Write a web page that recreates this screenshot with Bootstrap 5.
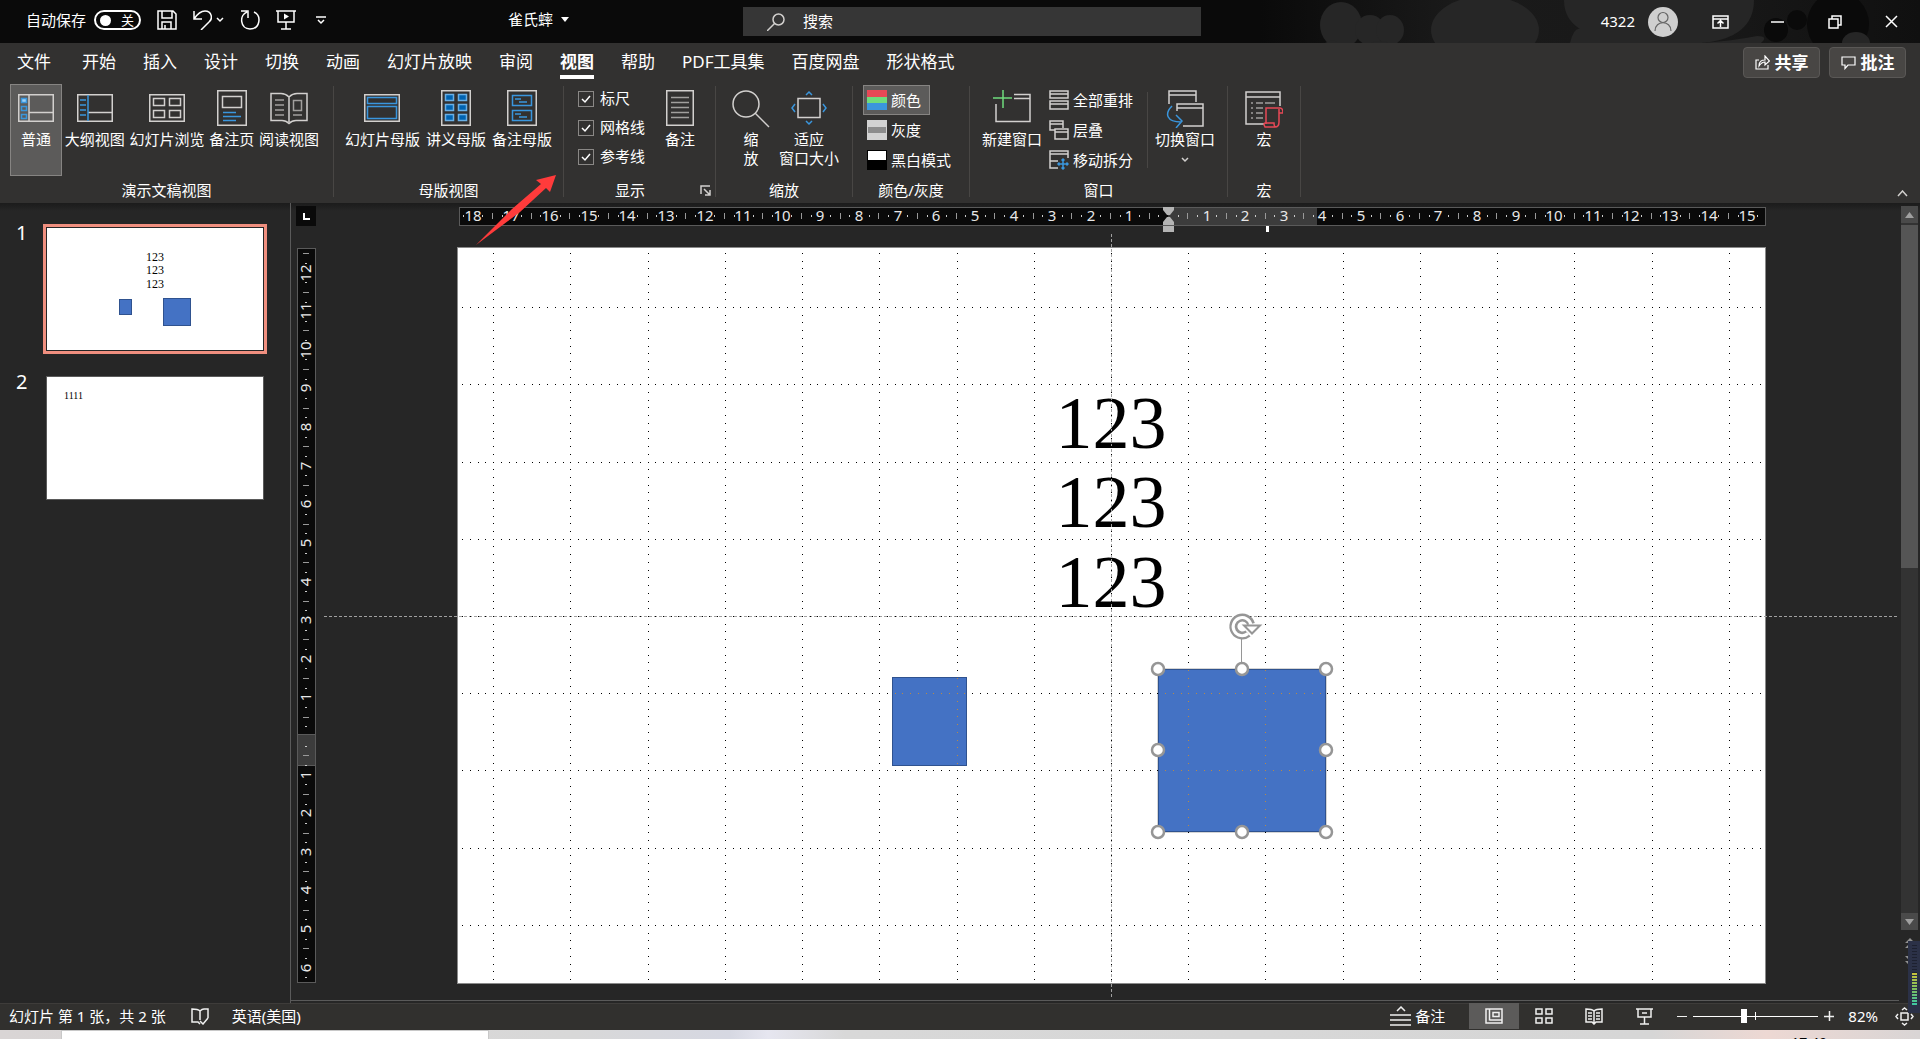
<!DOCTYPE html>
<html lang="zh-CN">
<head>
<meta charset="utf-8">
<meta name="viewport" content="width=device-width, initial-scale=1">
<title>雀氏蟀 - PowerPoint</title>
<link href="https://cdn.jsdelivr.net/npm/bootstrap@5.3.0/dist/css/bootstrap.min.css" rel="stylesheet">
<style>
:root{--blue:#3a96dd;--line:#d2d0ce}
body{font-family:"Noto Sans","Noto Sans CJK SC",sans-serif;font-size:15px;line-height:19px;color:#fff;background:#262626;overflow:hidden}
button{font:inherit;color:inherit;background:none;border:0;padding:0}
a{color:inherit;text-decoration:none}
svg{display:block;flex:none;fill:none;stroke:var(--line);stroke-width:1.5}
svg text{stroke:none;fill:#e8e8e8}
.b{stroke:var(--blue)}
.titlebar{height:43px;background:#0a0a0a;display:grid;grid-template-columns:508px 235px minmax(200px,458px) 1fr}
.quick{padding:0 0 3px 26px;gap:16px}
.quick svg,.wctl svg{stroke:#fff}
.deco{top:0;right:0;stroke:none}
.switch{width:47px;height:20px;border:2px solid #fff;border-radius:10px;padding:0 5px 0 4px;font-size:13px;line-height:16px}
.knob{width:11px;height:11px;border-radius:50%;background:#fff}
.finder{height:29px;background:#363636;padding-left:24px;gap:18px}
.finder input{background:none;border:0;outline:0;color:#fff;padding:0;line-height:19px}
.finder input::placeholder{color:#fff;opacity:1}
.wctl button{width:57px;height:43px}
.avatar{width:30px;height:30px;border-radius:50%;background:#cfcfcf;margin:0 14px 0 13px}
.wctl .avatar svg{stroke:#666;stroke-width:1.2}
.ribbon{background:#323130;height:160px}
.tabs{height:41px;font-size:17px;line-height:24px;gap:27px;padding:0 14px 0 17px}
.tabs a{padding:7px 0 1px}
.tabs a:first-child{margin-right:4px}
.tabs a.active{font-weight:700;border-bottom:4px solid #fff;align-self:flex-start}
.pill{width:77px;height:31px;border:1px solid #5a5856;border-radius:4px;background:#484644;font-weight:700;gap:5px;margin:4px 0 0 9px}
.pill svg{stroke-width:1.2;stroke:#fff}
.grp{display:flex;flex-direction:column;height:119px}
.grp>.body{height:92px;display:flex}
.grp>.cap{text-align:center;margin-top:5px;display:flex;align-items:center}
.grp>.cap span{flex:1}
.sep{width:1px;margin:2px 0 6px;background:#484644}
.big{padding:6px 3px 0;display:flex;flex-direction:column;align-items:center;height:92px;white-space:nowrap}
.big svg{margin-bottom:4px}
.big.on,.sm.on{background:#5c5b5a;box-shadow:inset 0 0 0 1px #868482}
.views .big{padding:6px 2px 0}
.views .big.on{width:52px}
.sm{display:flex;align-items:center;gap:4px;height:30px;padding:0 9px 0 4px;white-space:nowrap}
.chk{display:flex;align-items:center;gap:6px;height:29px}
.chk input{appearance:none;width:16px;height:16px;margin:0;border:1px solid #8a8886;background:url("data:image/svg+xml,%3Csvg xmlns='http://www.w3.org/2000/svg' viewBox='0 0 14 14'%3E%3Cpath d='M3 7l3 3 5-6' fill='none' stroke='white' stroke-width='1.5'/%3E%3C/svg%3E") center/14px}
.work{background:linear-gradient(#1b1b1b,#262626 8px);min-height:0}
.slides{width:291px;border-right:1px solid #5a5a5a;padding:21px 0 0 16px}
.slides .item{gap:19px;margin-bottom:19px;align-items:flex-start}
.slides .num{width:11px;font-size:20px;line-height:17px}
.thumb{background:#fff;border:1px solid #5a5a5a;width:218px;margin:3px 0}
.thumb.sel{border:1px solid #262626;box-shadow:0 0 0 3px #f08f7f}
.thumb svg{stroke:#2f528f;stroke-width:1;width:216px;height:122px}
.thumb svg text{fill:#000;font-family:"Liberation Serif",serif}
.stage{min-width:0;border-bottom:1px solid #5a5a5a;margin-bottom:2px}
.stage svg{width:100%;height:100%}
.vscroll{width:21px;padding:3px 2px 0}
.vscroll .btn2{height:17px;background:#4a4a4a;display:flex;align-items:center;justify-content:center}
.vscroll .track{height:690px;background:#333;padding-top:2px}
.vscroll .grip{height:343px;background:#555}
.meter{right:0;bottom:26px;width:12px;height:72px;background:#2b3147;padding:4px 3px 7px 4px}
.meter i{display:block;height:28px;background:repeating-linear-gradient(#1d2130 0 1px,#2b3147 1px 3px)}
.meter i+i{height:33px;background:repeating-linear-gradient(#0000 0 2px,#2b3147 2px 3px),linear-gradient(#c8c23c,#7cc060 50%,#38c8a8)}
.status{height:27px;background:#31302e;border-top:1px solid #3e3c3a;padding:0 6px 2px 9px}
.status svg{stroke:#f0f0f0}
.vbtn{width:50px;height:26px;display:flex;align-items:center;justify-content:center}
.vbtn.on{background:#5c5b5a}
.zoomer{appearance:none;width:125px;height:14px;margin:0 6px;background:linear-gradient(#fff,#fff) 62px 50%/1px 8px no-repeat,linear-gradient(#fff,#fff) 0 50%/100% 1px no-repeat}
.zoomer::-webkit-slider-thumb{appearance:none;width:6px;height:14px;background:#fff}
.task{height:9px;background:linear-gradient(90deg,#d9d5d5 0,#d8d8d8 30%,#d6d8e2 38%,#e6e6f0 40%,#d8d8d8 44%,#d6d6d6 86%,#edd8d3 92%,#d9d5d5);padding-left:61px;color:#000}
.task .find{width:428px;background:#fff;border:1px solid #c8c8c8;border-bottom:0}
.task .clock{margin-right:93px;padding-top:3px;font-size:14px}
.arrow{left:0;top:0;z-index:5;pointer-events:none;stroke:none}
</style>
<script src="https://cdn.jsdelivr.net/npm/bootstrap@5.3.0/dist/js/bootstrap.bundle.min.js"></script>
</head>
<body class="vh-100 d-flex flex-column position-relative">
<header class="titlebar position-relative">
  <svg class="deco position-absolute" width="660" height="43" viewBox="1260 0 660 43">
    <defs><linearGradient id="fade"><stop offset="0" stop-color="#0a0a0a"/><stop offset=".3" stop-color="#1a1a1a"/><stop offset=".7" stop-color="#181818"/><stop offset="1" stop-color="#101010"/></linearGradient></defs>
    <rect x="1260" width="660" height="43" fill="url(#fade)"/>
    <g fill="#262626"><ellipse cx="1341" cy="25" rx="21" ry="23"/><ellipse cx="1370" cy="30" rx="15" ry="15"/><ellipse cx="1390" cy="30" rx="14" ry="15"/><path d="M1325 43q8-5 14 0zM1370 43q10-4 20 0z"/><ellipse cx="1485" cy="30" rx="54" ry="34"/><path d="M1564 0h190q0 38-52 43h-132q4-16 10-14-16-10-16-29z"/><path d="M1702 43q30-2 55-7 12 0 4 7z"/></g>
    <g fill="#0a0a0a"><ellipse cx="1838" cy="24" rx="31" ry="32"/><circle cx="1797" cy="20" r="10"/><circle cx="1776" cy="30" r="12"/></g>
    <ellipse cx="1856" cy="43" rx="14" ry="11" fill="#262626"/>
  </svg>
  <div class="quick d-flex align-items-center">
    <div class="d-flex align-items-center gap-2"><span>自动保存</span>
      <button class="switch d-flex align-items-center justify-content-between" aria-label="自动保存"><span class="knob"></span>关</button></div>
    <button aria-label="保存"><svg width="20" height="20"><path d="M1 1h15l3 3v15H1zM5 1v7h10V1M5 19v-7h9v7M8 19v-4"/></svg></button>
    <button class="d-flex align-items-center gap-1" aria-label="撤消"><svg width="19" height="20"><path d="M1 1v8h8M1 9C5 3 9 1 12 1c7 0 8 8 4 11l-8 8"/></svg><svg width="8" height="6"><path d="M1 1l3 3 3-3"/></svg></button>
    <button aria-label="重复"><svg width="20" height="20"><path d="M1 1h7v7M7 2C-1 5 0 19 10 19s12-13 4-17"/></svg></button>
    <button aria-label="从头放映"><svg width="20" height="20"><path d="M0 1h20M2 1v11h16V1M10 12v7M5 19h10"/><path d="M8 3.500l5 3-5 3z" fill="#fff" stroke="none"/></svg></button>
    <button class="ms-1" aria-label="自定义"><svg width="10" height="9"><path d="M0 1h10M2 4l3 3 3-3"/></svg></button>
  </div>
  <button class="d-flex align-items-center gap-2 align-self-center pb-1">雀氏蟀 <svg width="8" height="5"><path d="M0 0h8L4 5z" fill="#fff" stroke="none"/></svg></button>
  <label class="finder d-flex align-items-center align-self-center"><svg width="18" height="18"><circle cx="11.500" cy="6.500" r="5.500"/><path d="M7.500 10.500L0 18"/></svg><input type="search" aria-label="搜索" placeholder="搜索"></label>
  <div class="wctl d-flex align-items-center justify-content-end position-relative">
    <span>4322</span><span class="avatar"><svg width="30" height="30"><circle cx="15" cy="10.500" r="5"/><path d="M7 24c0-11 16-11 16 0"/></svg></span>
    <button class="d-flex align-items-center justify-content-center" aria-label="功能区显示选项"><svg width="17" height="14"><path d="M1 1h15v12H1zM1 4h15M8.500 12V6M5.500 8.500l3-3 3 3"/></svg></button>
    <button class="d-flex align-items-center justify-content-center" aria-label="最小化"><svg width="13" height="2"><path d="M0 1h13"/></svg></button>
    <button class="d-flex align-items-center justify-content-center" aria-label="还原"><svg width="14" height="14"><path d="M1 4h9v9H1zM4 4V1h9v9h-3"/></svg></button>
    <button class="d-flex align-items-center justify-content-center" aria-label="关闭"><svg width="13" height="13"><path d="M1 1l11 11M12 1L1 12"/></svg></button>
  </div>
</header>

<section class="ribbon">
  <nav class="tabs d-flex">
    <a href="#">文件</a><a href="#">开始</a><a href="#">插入</a><a href="#">设计</a><a href="#">切换</a><a href="#">动画</a><a href="#">幻灯片放映</a><a href="#">审阅</a><a href="#" class="active">视图</a><a href="#">帮助</a><a href="#">PDF工具集</a><a href="#">百度网盘</a><a href="#">形状格式</a>
    <div class="ms-auto d-flex">
      <button class="pill d-flex align-items-center justify-content-center"><svg width="15" height="15"><path d="M4 5H1v9h12v-4M4 11c0-5 3-6 6-6V1l4.500 5L10 10V7c-3 0-4 1-6 4z"/></svg>共享</button>
      <button class="pill d-flex align-items-center justify-content-center"><svg width="15" height="15"><path d="M1 2h13v8H7l-3 3.500V10H1z"/></svg>批注</button>
    </div>
  </nav>
  <div class="d-flex">
    <div class="grp views" style="width:333px">
      <div class="body justify-content-between" style="padding:0 12px 0 10px">
        <button class="big on"><svg width="36" height="36"><path d="M.75 4.750h34.500v26.500H.75zM11 5v26M11 22.500h24"/><path class="b" d="M3.500 8.500h5v4h-5z" fill="#9cd0f5"/><path class="b" d="M3.500 16.500h5v4h-5zM3.500 24.500h5v4h-5z"/></svg>普通</button>
        <button class="big"><svg width="36" height="36"><path d="M.75 4.750h34.500v26.500H.75zM11 22.500h24"/><path class="b" d="M11 5v26M3 10h6M3 15h6M3 20h6M3 25h6"/></svg>大纲视图</button>
        <button class="big"><svg width="36" height="36"><path d="M.75 4.750h34.500v26.500H.75zM4.500 8.500h11v7h-11zM20.500 8.500h11v7h-11zM4.500 20.500h11v7h-11zM20.500 20.500h11v7h-11z"/></svg>幻灯片浏览</button>
        <button class="big"><svg width="30" height="36"><path d="M.75.75h28.500v34.500H.75zM5.500 6.500h19v11h-19z"/><path class="b" d="M6 22.500h13M6 26.500h18M6 30.500h13"/></svg>备注页</button>
        <button class="big"><svg width="38" height="36"><path d="M19 7C16 4 14 3.500 11 3.500H1v27h11c4 0 5 1 7 3 2-2 3-3 7-3h11v-27H27c-3 0-5 .5-8 3.500zM19 7v25"/><path d="M5 10h9M5 15h9M5 20h9M5 25h9M23.500 10.500h8v10h-8zM23 25h9" stroke="#a19f9d"/></svg>阅读视图</button>
      </div>
      <div class="cap"><span>演示文稿视图</span></div>
    </div>
    <div class="sep"></div>
    <div class="grp" style="width:229px">
      <div class="body justify-content-center">
        <button class="big"><svg width="36" height="36"><path d="M.75 4.750h34.500v26.500H.75z"/><path class="b" d="M3.500 7.500h29v6h-29zM3.500 16.500h29v12h-29z"/></svg>幻灯片母版</button>
        <button class="big"><svg width="30" height="36"><path d="M.75.75h28.500v34.500H.75z"/><path d="M4.500 4.500h8v6h-8zM17.500 4.500h8v6h-8zM4.500 14.500h8v6h-8zM17.500 14.500h8v6h-8zM4.500 24.500h8v6h-8zM17.500 24.500h8v6h-8z" fill="#0063b1" stroke="#69afe5"/></svg>讲义母版</button>
        <button class="big"><svg width="30" height="36"><path d="M.75.75h28.500v34.500H.75z"/><path class="b" d="M5.500 5.500h19v10h-19zM5.500 20.500h19v10h-19zM8 9h6M12 12h8M8 24h6M12 27h8"/></svg>备注母版</button>
      </div>
      <div class="cap"><span>母版视图</span></div>
    </div>
    <div class="sep"></div>
    <div class="grp" style="width:151px">
      <div class="body justify-content-between" style="padding:0 17px 0 14px">
        <div><label class="chk"><input type="checkbox" checked>标尺</label><label class="chk"><input type="checkbox" checked>网格线</label><label class="chk"><input type="checkbox" checked>参考线</label></div>
        <button class="big"><svg width="28" height="36"><path d="M.75.75h26.500v34.500H.75z"/><path d="M5 7.500h18M5 12.500h18M5 17.500h18M5 22.500h18M5 27.500h18" stroke="#a19f9d"/></svg>备注</button>
      </div>
      <div class="cap pe-1"><span>显示</span><button class="ps-1" aria-label="显示设置"><svg width="11" height="11"><path d="M1 9V1h9M4 4l6 6M10 5v5H5"/></svg></button></div>
    </div>
    <div class="sep"></div>
    <div class="grp" style="width:136px">
      <div class="body justify-content-center">
        <button class="big" style="width:50px"><svg width="38" height="38" style="margin-bottom:2px"><circle cx="14" cy="14" r="13"/><path d="M23 23l14 14"/></svg>缩<br>放</button>
        <button class="big"><svg width="36" height="36"><path d="M7 8.500h22v19H7z"/><path class="b" d="M15 5l3-3 3 3M15 31l3 3 3-3M4 14l-3 4 3 4M32 14l3 4-3 4"/></svg>适应<br>窗口大小</button>
      </div>
      <div class="cap"><span>缩放</span></div>
    </div>
    <div class="sep"></div>
    <div class="grp" style="width:116px">
      <div class="body flex-column align-items-start" style="padding:1px 0 0 10px">
        <button class="sm on"><svg width="20" height="20" style="stroke:none"><path d="M0 0h20v7H0z" fill="#e74856"/><path d="M0 7h20v6H0z" fill="#6fdc7c"/><path d="M0 13h20v7H0z" fill="#3a96dd"/></svg>颜色</button>
        <button class="sm"><svg width="20" height="20" style="stroke:none"><path d="M0 0h20v20H0z" fill="#d2d2d2"/><path d="M1 7h18v6H1z" fill="#8c8c8c"/></svg>灰度</button>
        <button class="sm"><svg width="20" height="20" style="stroke:none"><path d="M0 0h20v20H0z" fill="#000"/><path d="M1 1h18v9H1z" fill="#fff"/></svg>黑白模式</button>
      </div>
      <div class="cap"><span>颜色/灰度</span></div>
    </div>
    <div class="sep"></div>
    <div class="grp" style="width:257px">
      <div class="body" style="padding-left:9px">
        <button class="big"><svg width="38" height="36"><path d="M3 14v17.500h34v-27H21M21 8.500h16"/><path d="M10 0v18M0 8h19" stroke="#6fdc7c"/></svg>新建窗口</button>
        <div style="width:102px;padding-top:1px">
          <button class="sm"><svg width="20" height="20"><path d="M1 1h18v7H1zM1 4h18M1 11h18v8H1zM1 14h18"/></svg>全部重排</button>
          <button class="sm"><svg width="20" height="20"><path d="M6 10H1V1h13v7M1 4h13M6 9h13v10H6zM6 12h13"/></svg>层叠</button>
          <button class="sm"><svg width="20" height="20"><path d="M19 8V1H1v17h8M1 4h18M1 11h8"/><path class="b" d="M14 9v10M9 14h10M12.500 10.500l1.500-1.500 1.500 1.500M12.500 17.500l1.500 1.500 1.500-1.500M10.500 12.500L9 14l1.500 1.500M17.500 12.500L19 14l-1.500 1.500"/></svg>移动拆分</button>
        </div>
        <div class="sep my-2"></div>
        <button class="big ms-1"><svg width="38" height="38" style="margin-bottom:2px"><path d="M3 14V1h27v11M3 5h27M11 21v-7h26v22H17M11 18h26"/><path class="b" d="M6 16c-8 8-5 16 9 16M10 25l6 6-6 7"/></svg>切换窗口<svg width="8" height="6" class="mt-2"><path d="M1 1l3 3 3-3"/></svg></button>
      </div>
      <div class="cap"><span>窗口</span></div>
    </div>
    <div class="sep"></div>
    <div class="grp" style="width:72px">
      <div class="body justify-content-center">
        <button class="big"><svg width="38" height="38" style="margin-bottom:2px"><path d="M35 16V2H1v32h18M1 7h34"/><path d="M6 13h2M11 13h7M20 13h10M6 18h2M11 18h7M6 23h2M11 23h7M6 28h2M11 28h7" stroke="#a19f9d"/><path d="M21 34V18h14q3 0 3 5h-4M34 19v13q0 5-4 5H20q-2-4 0-4h9q0 4 2 4" stroke="#e74856"/></svg>宏</button>
      </div>
      <div class="cap"><span>宏</span></div>
    </div>
    <div class="sep"></div>
    <button class="ms-auto align-self-end" style="padding:0 12px 6px" aria-label="折叠功能区"><svg width="11" height="7"><path d="M1 6l4.500-5L10 6"/></svg></button>
  </div>
</section>

<main class="work d-flex flex-grow-1">
  <aside class="slides flex-shrink-0">
    <div class="item d-flex"><span class="num">1</span>
      <button class="thumb sel"><svg viewBox="0 0 216 122"><g font-size="12" text-anchor="middle"><text x="108" y="33">123</text><text x="108" y="46">123</text><text x="108" y="60">123</text></g><rect x="72.500" y="71.500" width="12" height="15" fill="#4472c4"/><rect x="116.500" y="70.500" width="27" height="27" fill="#4472c4"/></svg></button></div>
    <div class="item d-flex"><span class="num">2</span>
      <button class="thumb"><svg viewBox="0 0 216 122"><text x="17" y="22" font-size="10">1111</text></svg></button></div>
  </aside>
  <section class="stage flex-grow-1">
    <svg viewBox="291 203 1608 797">
      <path d="M296 206h20v20h-20z" fill="#0a0a0a" stroke="none"/><path d="M304 213v6h6" stroke="#fff" stroke-width="2"/>
      <g stroke="#5a5a5a" stroke-width="1" fill="#0a0a0a"><rect x="459.500" y="207.500" width="1306" height="18"/><rect x="297.500" y="248.500" width="18" height="734"/></g>
      <path d="M1168 208h149v17h-149z" fill="#3c3c3c" stroke="none"/><rect x="297.500" y="734.500" width="18" height="31" fill="#3c3c3c" stroke="#5a5a5a" stroke-width="1"/>
      <g id="ruler" font-size="15" text-anchor="middle"></g>
      <g fill="#b4b4b4" stroke="none"><path d="M1163 207h11v3l-4 5h-3l-4-5zM1163 225h11v-3l-4-5h-3l-4 5zM1163 226h11v6h-11z"/><path d="M1266 226h3v6h-3z" fill="#fff"/></g>
      <rect x="457.500" y="247.500" width="1308" height="736" fill="#fff" stroke="#8a8a8a" stroke-width="1"/>
      <g font-size="74" text-anchor="middle" font-family="'Liberation Serif',serif"><text x="1111" y="448" style="fill:#000">123</text><text x="1111" y="527" style="fill:#000">123</text><text x="1111" y="607" style="fill:#000">123</text></g>
      <g fill="#4472c4" stroke="#2f528f" stroke-width="1"><rect x="892.500" y="677.500" width="74" height="88"/><rect x="1158.500" y="669.500" width="167" height="162"/></g>
      <rect x="1157.500" y="668.500" width="169" height="164" stroke="#aaa" stroke-width="1" stroke-dasharray="1 1"/>
      <g stroke="#a0a0a0" stroke-width="1" stroke-dasharray="3 2"><path d="M324 616.500h1575M1111.500 234v764"/></g>
      <path id="dots" fill="#000" stroke="none"/><path id="dotsOver" fill="#b98a45" stroke="none"/>
      <path d="M1241.500 638v26" stroke="#969696" stroke-width="1"/>
      <g stroke="#969696"><path d="M1248 633.500A9 9 0 1 1 1251 624" stroke-width="8"/><path d="M1248 633.500A9 9 0 1 1 1251 625" stroke="#fff" stroke-width="3"/><path d="M1244 625.500h16l-8 8z" fill="#fff" stroke-width="2"/></g>
      <g id="grips" fill="#fff" stroke="#969696" stroke-width="2.500"></g>
    </svg>
  </section>
  <div class="vscroll flex-shrink-0">
    <button class="btn2 w-100" aria-label="向上"><svg width="9" height="6"><path d="M0 6l4.500-6L9 6z" fill="#a0a0a0" stroke="none"/></svg></button>
    <div class="track"><div class="grip"></div></div>
    <button class="btn2 w-100" aria-label="向下"><svg width="9" height="6"><path d="M0 0l4.500 6L9 0z" fill="#a0a0a0" stroke="none"/></svg></button>
    <button class="d-block mx-auto mt-2" aria-label="上一张"><svg width="10" height="10"><path d="M0 5l5-5 5 5zM0 10l5-5 5 5z" fill="#909090" stroke="none"/></svg></button>
    <button class="d-block mx-auto mt-2" aria-label="下一张"><svg width="10" height="10"><path d="M0 0l5 5 5-5zM0 5l5 5 5-5z" fill="#909090" stroke="none"/></svg></button>
  </div>
</main>

<footer class="status d-flex align-items-center flex-shrink-0">
  <span>幻灯片 第 1 张，共 2 张</span>
  <button style="margin:0 23px 0 25px" aria-label="拼写检查"><svg width="18" height="17"><path d="M9 3Q7 1 1 1v13h6l2 2M9 3v9M9 3q2-2 4-2h4v9M9 13l3 3 5-6"/></svg></button>
  <button>英语(美国)</button>
  <button class="ms-auto me-4 d-flex align-items-center"><svg width="21" height="20" class="me-1"><path d="M7 5l4-4 4 4M0 9h21M0 14h21M0 19h21"/></svg>备注</button>
  <button class="vbtn on" aria-label="普通视图"><svg width="18" height="16"><path d="M1 1h16v14H1zM4.500 1v11.500M4.500 12h12M8 4.500h6v4H8z"/></svg></button>
  <button class="vbtn" aria-label="幻灯片浏览"><svg width="18" height="16"><path d="M1 1h6v5H1zM11 1h6v5h-6zM1 10h6v5H1zM11 10h6v5h-6z"/></svg></button>
  <button class="vbtn" aria-label="阅读视图"><svg width="18" height="17"><path d="M9 3Q7 1 1 1v13h6l2 2 2-2h6V1q-6 0-8 2zM9 3v12M3 5h4M3 8h4M3 11h4M11 5h4M11 8h4M11 11h4"/></svg></button>
  <button class="vbtn" aria-label="幻灯片放映"><svg width="17" height="17"><path d="M0 1h17M2 1v8h13V1M6 5h5M8.500 9v7M4 16h9"/></svg></button>
  <button class="ms-2" aria-label="缩小"><svg width="10" height="10"><path d="M0 5.500h10" stroke-width="1"/></svg></button>
  <input class="zoomer" type="range" min="10" max="188" value="82" aria-label="缩放">
  <button aria-label="放大"><svg width="10" height="10"><path d="M0 5.500h10M5.500 0v10"/></svg></button>
  <button style="margin:0 17px 0 14px">82%</button>
  <button aria-label="适应窗口"><svg width="19" height="19"><path d="M6 6h7v7H6zM7 3l2.500-2L12 3M7 16l2.500 2 2.500-2M3 7L1 9.500 3 12M16 7l2 2.500-2 2.500"/></svg></button>
</footer>
<div class="task d-flex justify-content-between overflow-hidden flex-shrink-0"><div class="find"></div><div class="clock">17:49</div></div>

<div class="meter position-absolute"><i></i><i></i></div>
<svg class="arrow position-absolute" width="600" height="260"><path d="M476 245L512 209 541 184l-5-4 20-5-6 17-4-4-26 24z" fill="#ff3b3b"/></svg>

<script>
const U = 38.62, X0 = 1168, Y0 = 736, GX = 1111, GY = 616;
let out = '';
const inX = x => x > 461 && x < 1764, inY = y => y > 250 && y < 982;
// horizontal ruler: number on each unit, tall tick on the half, dots on the quarters
for (let q = -73; q <= 62; q++) {
  const x = Math.round(X0 + q * U / 4);
  if (!inX(x)) continue;
  if (q % 4 === 0) { if (q) out += `<text x="${x}" y="221">${Math.abs(q / 4)}</text>`; }
  else if (q % 2 === 0) out += `<rect x="${x}" y="213" width="1" height="6" fill="#999" stroke="none"/>`;
  else out += `<rect x="${x}" y="215" width="1" height="2" fill="#ccc" stroke="none"/>`;
}
// vertical ruler, numbers read from bottom to top
for (let q = -51; q <= 26; q++) {
  const y = Math.round(Y0 + q * U / 4);
  if (!inY(y)) continue;
  if (q % 4 === 0) { if (q) out += `<text transform="translate(311 ${y}) rotate(-90)">${Math.abs(q / 4)}</text>`; }
  else if (q % 2 === 0) out += `<rect x="303" y="${y}" width="6" height="1" fill="#999" stroke="none"/>`;
  else out += `<rect x="305" y="${y}" width="2" height="1" fill="#ccc" stroke="none"/>`;
}
document.getElementById('ruler').innerHTML = out;
// dotted grid: a line every two units, ten dots between lines
let base = '', over = '';
const hit = (x, y) => (x > 892 && x < 967 && y > 677 && y < 766) || (x > 1158 && x < 1326 && y > 669 && y < 832);
for (let i = -84; i <= 84; i++) for (let j = -47; j <= 47; j++) {
  if (i % 10 && j % 10) continue;
  const x = Math.round(GX + i * U / 5), y = Math.round(GY + j * U / 5);
  if (!inX(x) || !inY(y)) continue;
  const d = `M${x} ${y}h1v1h-1z`;
  hit(x, y) ? over += d : base += d;
}
document.getElementById('dots').setAttribute('d', base);
document.getElementById('dotsOver').setAttribute('d', over);
document.getElementById('grips').innerHTML = [[1158,669],[1242,669],[1326,669],[1158,750],[1326,750],[1158,832],[1242,832],[1326,832]].map(p => `<circle cx="${p[0]}" cy="${p[1]}" r="6"/>`).join('');
</script>
</body>
</html>
